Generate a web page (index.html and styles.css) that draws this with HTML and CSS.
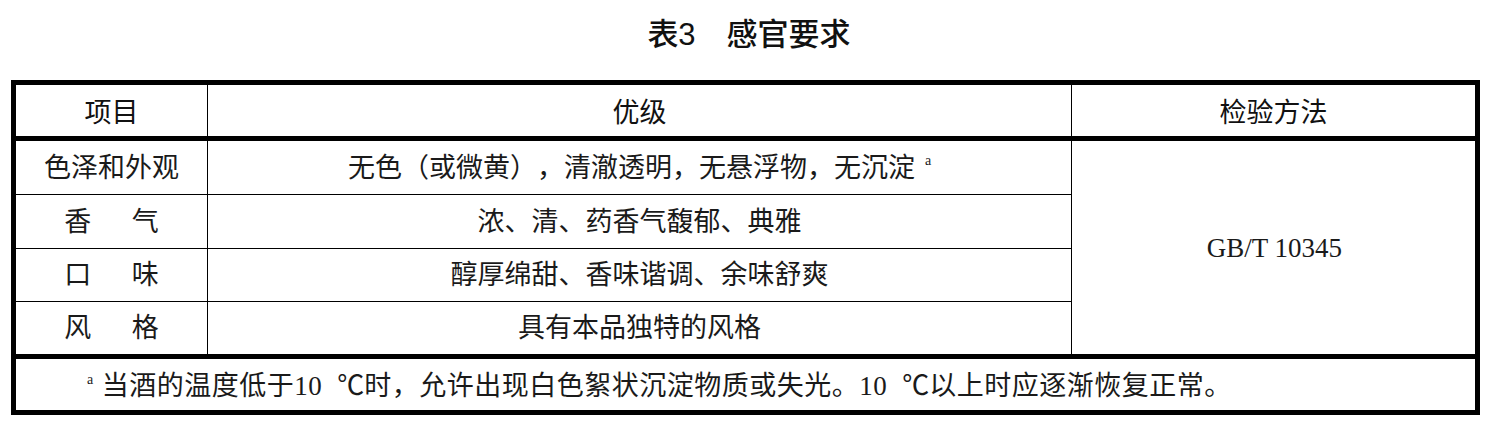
FILE: index.html
```html
<!DOCTYPE html>
<html lang="zh-CN">
<head>
<meta charset="utf-8">
<title>表3 感官要求</title>
<link rel="stylesheet" href="styles.css">
</head>
<body>
<h1 class="title">表3　感官要求</h1>
<table class="spec">
  <colgroup>
    <col class="c1">
    <col class="c2">
    <col class="c3">
  </colgroup>
  <thead>
    <tr>
      <th class="first">项目</th>
      <th>优级</th>
      <th>检验方法</th>
    </tr>
  </thead>
  <tbody>
    <tr class="r53">
      <td class="first">色泽和外观</td>
      <td>无色（或微黄），清澈透明，无悬浮物，无沉淀<sup class="note">a</sup></td>
      <td class="method" rowspan="4">GB/T 10345</td>
    </tr>
    <tr class="r53">
      <td class="first">香&emsp;&ensp;气</td>
      <td>浓、清、药香气馥郁、典雅</td>
    </tr>
    <tr class="r52">
      <td class="first">口&emsp;&ensp;味</td>
      <td>醇厚绵甜、香味谐调、余味舒爽</td>
    </tr>
    <tr class="r52 last">
      <td class="first">风&emsp;&ensp;格</td>
      <td>具有本品独特的风格</td>
    </tr>
  </tbody>
  <tfoot>
    <tr>
      <td class="foot" colspan="3"><sup class="fnote">a</sup>当酒的温度低于10<span class="deg">℃</span>时，允许出现白色絮状沉淀物质或失光。10<span class="deg">℃</span>以上时应逐渐恢复正常。</td>
    </tr>
  </tfoot>
</table>
</body>
</html>
```

FILE: styles.css
```css
html, body {
  margin: 0;
  padding: 0;
  background: #ffffff;
  color: #111111;
}

.title {
  margin: 0;
  padding-top: 15px;
  height: 80px;
  box-sizing: border-box;
  text-align: center;
  font-family: "Liberation Sans", "Noto Sans CJK SC", sans-serif;
  font-size: 31px;
  font-weight: 500;
  line-height: 40px;
  text-spacing-trim: space-all;
}

.spec {
  margin-left: 11px;
  width: 1469px;
  table-layout: fixed;
  border-collapse: separate;
  border-spacing: 0;
  border: 5px solid #000000;
  font-family: "Liberation Serif", "Noto Sans CJK SC", serif;
  font-size: 27px;
  line-height: 32px;
  text-spacing-trim: space-all;
}

.c1 { width: 191px; }
.c2 { width: 864px; }
.c3 { width: 404px; }

.spec th,
.spec td {
  padding: 0;
  text-align: center;
  vertical-align: middle;
  border-left: 1px solid #000000;
  font-weight: 400;
}

.spec th.first,
.spec td.first {
  border-left: 0;
}

.spec th {
  height: 51px;
  border-bottom: 5px solid #000000;
  font-family: "Noto Sans CJK SC", sans-serif;
  color: #111111;
}

.spec tbody td {
  border-bottom: 1px solid #000000;
  color: #1a1a1a;
}

.spec tbody tr.last td,
.spec td.method {
  border-bottom: 0;
}

.r53 td { height: 53px; }
.r52 td { height: 52px; }

.spec td.method {
  height: auto;
  padding-left: 2px;
}

.deg {
  font-family: "Noto Sans CJK SC", sans-serif;
  display: inline-block;
  width: 27px;
  margin-left: 15px;
  text-align: right;
}

.note {
  font-size: 14px;
  line-height: 0;
  vertical-align: 12px;
  margin-left: 10px;
}

.spec td.foot {
  height: 51px;
  border-left: 0;
  border-top: 5px solid #000000;
  text-align: left;
  padding-left: 71px;
  letter-spacing: 0.5px;
  color: #1a1a1a;
}

.fnote {
  font-size: 14px;
  line-height: 0;
  vertical-align: 11px;
  margin-right: 8px;
}
```
